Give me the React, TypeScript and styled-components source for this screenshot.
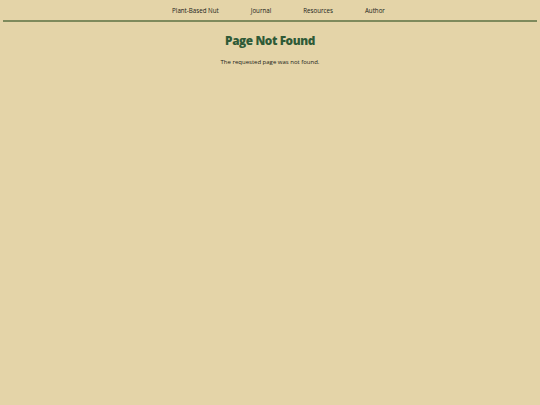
import styled, { createGlobalStyle } from "styled-components";

const GlobalStyle = createGlobalStyle`
  html, body {
    margin: 0;
    padding: 0;
    background: #e4d4a8;
  }
  body {
    font-family: "Open Sans", "Liberation Sans", sans-serif;
    color: #1a2218;
  }
`;

const Page = styled.div`
  min-height: 405px;
  padding: 0 3px;
  box-sizing: border-box;
`;

const Header = styled.header`
  height: 20px;
  display: flex;
  justify-content: center;
  align-items: center;
  gap: 32px;
  border-bottom: 2px solid #7e8a5c;
  padding-left: 17px;
`;

const NavLink = styled.a`
  font-size: 6.2px;
  color: #1a2218;
  text-decoration: none;
`;

const Main = styled.main`
  display: flex;
  flex-direction: column;
  align-items: center;
  padding-top: 10px;
`;

const Title = styled.h1`
  margin: 0;
  font-family: "Open Sans", "Liberation Sans", sans-serif;
  font-weight: 800;
  font-size: 11.8px;
  letter-spacing: -0.4px;
  color: #2f5a37;
`;

const Message = styled.p`
  margin: 10px 0 0;
  font-size: 6px;
  color: #1a2218;
`;

export default function App() {
  return (
    <>
      <GlobalStyle />
      <Page>
        <Header>
          <NavLink href="#">Plant-Based Nut</NavLink>
          <NavLink href="#">Journal</NavLink>
          <NavLink href="#">Resources</NavLink>
          <NavLink href="#">Author</NavLink>
        </Header>
        <Main>
          <Title>Page Not Found</Title>
          <Message>The requested page was not found.</Message>
        </Main>
      </Page>
    </>
  );
}
